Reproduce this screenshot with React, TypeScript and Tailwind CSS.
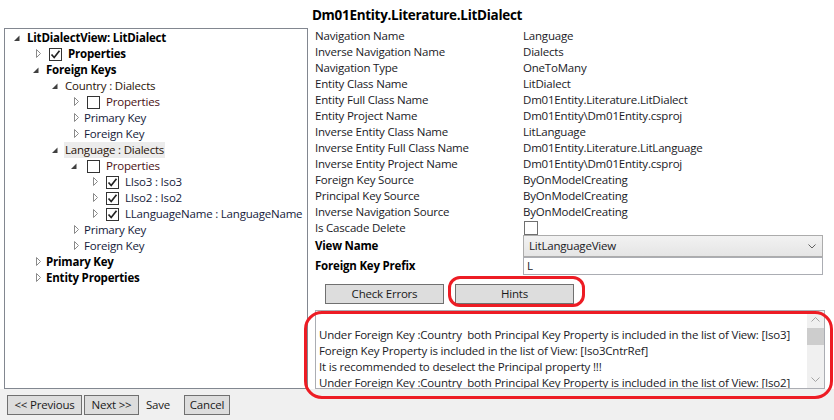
import React from "react"

type Toggle = "open" | "closed" | null

type Node = {
  level: number
  toggle: Toggle
  label: string
  check?: boolean
  bold?: boolean
  hl?: boolean
  tone?: string
}

const tree: Node[] = [
  { level: 0, toggle: "open", label: "LitDialectView: LitDialect", bold: true },
  { level: 1, toggle: "closed", label: "Properties", check: true, bold: true },
  { level: 1, toggle: "open", label: "Foreign Keys", bold: true },
  { level: 2, toggle: "open", label: "Country : Dialects", tone: "text-[#2a1408]" },
  { level: 3, toggle: "closed", label: "Properties", check: false, tone: "text-[#4a0f12]" },
  { level: 3, toggle: "closed", label: "Primary Key", tone: "text-[#141a3a]" },
  { level: 3, toggle: "closed", label: "Foreign Key", tone: "text-[#141a3a]" },
  { level: 2, toggle: "open", label: "Language : Dialects", hl: true, tone: "text-[#2a1408]" },
  { level: 3, toggle: "open", label: "Properties", check: false, tone: "text-[#4a0f12]" },
  { level: 4, toggle: "closed", label: "LIso3 : Iso3", check: true, tone: "text-[#141a3a]" },
  { level: 4, toggle: "closed", label: "LIso2 : Iso2", check: true, tone: "text-[#141a3a]" },
  { level: 4, toggle: "closed", label: "LLanguageName : LanguageName", check: true, tone: "text-[#141a3a]" },
  { level: 3, toggle: "closed", label: "Primary Key", tone: "text-[#141a3a]" },
  { level: 3, toggle: "closed", label: "Foreign Key", tone: "text-[#141a3a]" },
  { level: 1, toggle: "closed", label: "Primary Key", bold: true },
  { level: 1, toggle: "closed", label: "Entity Properties", bold: true },
]

const props: [string, string][] = [
  ["Navigation Name", "Language"],
  ["Inverse Navigation Name", "Dialects"],
  ["Navigation Type", "OneToMany"],
  ["Entity Class Name", "LitDialect"],
  ["Entity Full Class Name", "Dm01Entity.Literature.LitDialect"],
  ["Entity Project Name", "Dm01Entity\\Dm01Entity.csproj"],
  ["Inverse Entity Class Name", "LitLanguage"],
  ["Inverse Entity Full Class Name", "Dm01Entity.Literature.LitLanguage"],
  ["Inverse Entity Project Name", "Dm01Entity\\Dm01Entity.csproj"],
  ["Foreign Key Source", "ByOnModelCreating"],
  ["Principal Key Source", "ByOnModelCreating"],
  ["Inverse Navigation Source", "ByOnModelCreating"],
]

const hints = [
  "",
  "Under Foreign Key :Country  both Principal Key Property is included in the list of View: [Iso3]",
  "Foreign Key Property is included in the list of View: [Iso3CntrRef]",
  "It is recommended to deselect the Principal property !!!",
  "Under Foreign Key :Country  both Principal Key Property is included in the list of View: [Iso2]",
]

function Arrow({ toggle }: { toggle: Toggle }) {
  if (toggle === "open")
    return (
      <svg width="13" height="16" viewBox="0 0 13 16" className="shrink-0">
        <path d="M6.5 5.5 L6.5 11 L1 11 Z" fill="#404040" />
      </svg>
    )
  if (toggle === "closed")
    return (
      <svg width="13" height="16" viewBox="0 0 13 16" className="shrink-0">
        <path d="M4.5 3.5 L8.5 7.5 L4.5 11.5 Z" fill="#fff" stroke="#8a8a8a" strokeWidth="1" />
      </svg>
    )
  return <span className="w-[13px] shrink-0" />
}

function Check({ on }: { on: boolean }) {
  return (
    <span className="w-[13px] h-[13px] border border-[#333] bg-white flex items-center justify-center shrink-0">
      {on && (
        <svg width="11" height="11" viewBox="0 0 11 11">
          <path d="M1.5 5.5 L4.2 8.5 L9.5 1.8" fill="none" stroke="#222" strokeWidth="1.7" />
        </svg>
      )}
    </span>
  )
}

function TreeRow({ n }: { n: Node }) {
  const pads = ["pl-[8px]", "pl-[27px]", "pl-[46px]", "pl-[65px]", "pl-[84px]"]
  return (
    <div className={`flex items-center h-[16px] whitespace-nowrap ${pads[n.level]}`}>
      <Arrow toggle={n.toggle} />
      {n.check !== undefined && (
        <span className="ml-[4px] mr-[5px] flex">
          <Check on={n.check} />
        </span>
      )}
      <span
        className={`${n.bold ? "font-bold text-black" : n.tone} ${n.hl ? "bg-[#ececec]" : ""} px-[1px] leading-[16px]`}
      >
        {n.label}
      </span>
    </div>
  )
}

function Btn({ children, w }: { children: React.ReactNode; w: string }) {
  return (
    <div
      className={`${w} h-[20px] border border-[#707070] bg-[#dddddd] flex items-center justify-center text-[#1a1a1a]`}
    >
      {children}
    </div>
  )
}

export default function App() {
  return (
    <div className="relative w-[834px] h-[420px] bg-white flex flex-col overflow-hidden font-['Open_Sans',sans-serif] text-[11.5px] tracking-[-0.2px] text-[#1a1a26]">
      <div className="h-[28px] flex items-center justify-center pt-[2px]">
        <span className="font-bold text-[13.5px] tracking-[-0.3px] text-black">Dm01Entity.Literature.LitDialect</span>
      </div>

      <div className="flex h-[361px]">
        <div className="ml-[4px] w-[304px] h-[361px] border border-[#828790] pt-[1px] overflow-hidden">
          {tree.map((n, i) => (
            <TreeRow key={i} n={n} />
          ))}
        </div>

        <div className="flex-1 flex flex-col pl-[7px]">
          {props.map(([k, v]) => (
            <div key={k} className="flex h-[16px] leading-[16px] whitespace-nowrap">
              <span className="w-[208px]">{k}</span>
              <span>{v}</span>
            </div>
          ))}
          <div className="flex h-[15px] leading-[16px]">
            <span className="w-[208px]">Is Cascade Delete</span>
            <span className="w-[14px] h-[14px] border border-[#707070] bg-white mt-[1px] ml-[1px]" />
          </div>
          <div className="flex h-[22px] items-center">
            <span className="w-[208px] font-bold text-black">View Name</span>
            <div className="w-[300px] h-[22px] border border-[#acacac] bg-gradient-to-b from-[#f2f2f2] to-[#e5e5e5] flex items-center justify-between pl-[5px] pr-[6px]">
              <span>LitLanguageView</span>
              <svg width="8" height="5" viewBox="0 0 8 5">
                <path d="M0.5 0.5 L4 4 L7.5 0.5" fill="none" stroke="#606060" strokeWidth="1" />
              </svg>
            </div>
          </div>
          <div className="flex h-[18px] items-center">
            <span className="w-[208px] font-bold text-black">Foreign Key Prefix</span>
            <div className="w-[300px] h-[18px] border border-[#abadb3] bg-white flex items-center pl-[3px]">
              <span>L</span>
            </div>
          </div>

          <div className="flex gap-[11px] mt-[9px] ml-[10px]">
            <Btn w="w-[119px]">Check Errors</Btn>
            <Btn w="w-[119px]">Hints</Btn>
          </div>

          <div className="mt-[6px] w-[510px] h-[80px] border border-[#abadb3] bg-white flex overflow-hidden">
            <div className="flex-1 pl-[3px] overflow-hidden">
              {hints.map((h, i) => (
                <div key={i} className="h-[16px] leading-[16px] whitespace-pre">
                  {h}
                </div>
              ))}
            </div>
            <div className="w-[17px] bg-[#f0f0f0] flex flex-col items-center">
              <div className="h-[17px] flex items-center justify-center">
                <svg width="9" height="5" viewBox="0 0 9 5">
                  <path d="M0.5 4.5 L4.5 0.5 L8.5 4.5" fill="none" stroke="#a3a3a3" strokeWidth="1" />
                </svg>
              </div>
              <div className="w-[17px] h-[17px] bg-[#cdcdcd]" />
              <div className="flex-1" />
              <div className="h-[17px] flex items-center justify-center">
                <svg width="9" height="5" viewBox="0 0 9 5">
                  <path d="M0.5 0.5 L4.5 4.5 L8.5 0.5" fill="none" stroke="#a3a3a3" strokeWidth="1" />
                </svg>
              </div>
            </div>
          </div>
        </div>
      </div>

      <div className="flex-1 bg-[#f0f0f0] flex items-center pl-[7px] gap-[2px]">
        <Btn w="w-[75px]">&lt;&lt; Previous</Btn>
        <Btn w="w-[55px]">Next &gt;&gt;</Btn>
        <span className="ml-[5px] w-[36px] text-[#1a1a1a]">Save</span>
        <Btn w="w-[46px]">Cancel</Btn>
      </div>

      <div className="absolute left-[448px] top-[276px] w-[137px] h-[31px] border-[3px] border-[#ed1c24] rounded-[12px]" />
      <div className="absolute left-[304px] top-[311px] w-[529px] h-[88px] border-[3px] border-[#ed1c24] rounded-[18px]" />
    </div>
  )
}
